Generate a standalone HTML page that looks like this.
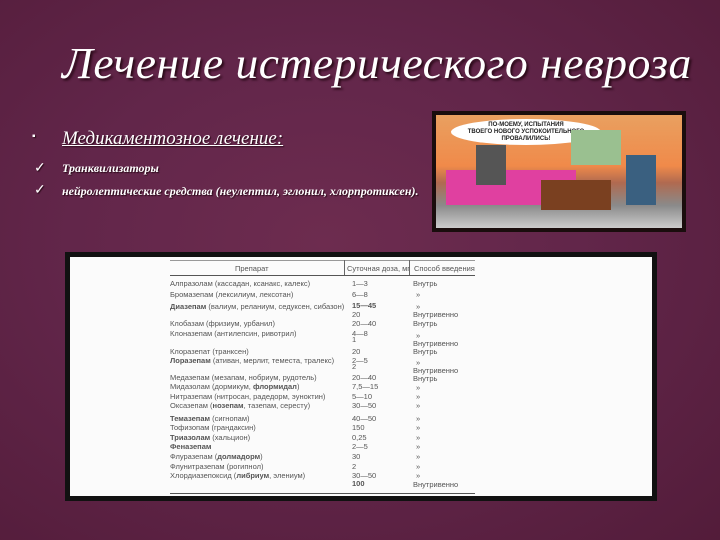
<!DOCTYPE html>
<html><head><meta charset="utf-8"><style>
body{margin:0;width:720px;height:540px;overflow:hidden;background:radial-gradient(ellipse at 45% 45%,#6d2c4f 0%,#62264a 45%,#531c3a 100%);font-family:"Liberation Serif",serif;position:relative}
.t{position:absolute;left:62px;top:38px;font-size:44px;font-style:italic;color:#fff;letter-spacing:0.5px;text-shadow:2px 2px 2px #2a0a18;white-space:nowrap;transform:scaleX(1.035);transform-origin:left}
.b{position:absolute;color:#fff;white-space:nowrap;text-shadow:1px 1px 1px #2a0a18}
.cart{position:absolute;left:432px;top:111px;width:254px;height:121px;background:#1a0d0d;box-sizing:border-box;padding:4px}
.cart>div{width:100%;height:100%;background:linear-gradient(180deg,#e9a060 0%,#f08a4a 45%,#b06a50 60%,#8a8a8a 80%,#ccc 100%);position:relative;overflow:hidden}
.tb{position:absolute;left:65px;top:252px;width:592px;height:249px;background:#111;box-sizing:border-box;padding:5px}
.in{width:100%;height:100%;background:#fbfbfb;position:relative;font-family:"Liberation Sans",sans-serif;font-size:7.5px;color:#555;overflow:hidden}
.in div{position:absolute;white-space:nowrap;line-height:8px}
</style></head><body>
<div class="t">Лечение истерического невроза</div>
<div class="b" style="left:32px;top:131px;font-size:10px">▪</div>
<div class="b" style="left:62px;top:128px;font-size:19px;font-style:italic;text-decoration:underline">Медикаментозное лечение:</div>
<div class="b" style="left:34px;top:160px;font-size:14px">✓</div>
<div class="b" style="left:62px;top:161px;font-size:12px;font-weight:bold;font-style:italic">Транквилизаторы</div>
<div class="b" style="left:34px;top:182px;font-size:14px">✓</div>
<div class="b" style="left:62px;top:184px;font-size:12px;font-weight:bold;font-style:italic">нейролептические средства (неулептил, эглонил, хлорпротиксен).</div>
<div class="cart"><div>
<div style="position:absolute;left:15px;top:4px;width:150px;height:26px;background:#fff;border-radius:50%;font:bold 6px 'Liberation Sans';color:#222;text-align:center;line-height:7px;padding-top:3px;box-sizing:border-box">ПО-МОЕМУ, ИСПЫТАНИЯ<br>ТВОЕГО НОВОГО УСПОКОИТЕЛЬНОГО<br>ПРОВАЛИЛИСЬ!</div>
<div style="position:absolute;left:10px;top:55px;width:130px;height:35px;background:#e040a0"></div>
<div style="position:absolute;left:105px;top:65px;width:70px;height:30px;background:#7a4020"></div>
<div style="position:absolute;left:40px;top:30px;width:30px;height:40px;background:#555"></div>
<div style="position:absolute;left:190px;top:40px;width:30px;height:50px;background:#3a6080"></div>
<div style="position:absolute;left:135px;top:15px;width:50px;height:35px;background:#9ac090"></div>
</div></div>
<div class="tb"><div class="in">
<div style="left:100px;top:3px;width:305px;border-top:1px solid #999;height:0"></div>
<div style="left:100px;top:18px;width:305px;border-top:1px solid #555;height:0"></div>
<div style="left:274px;top:3px;height:15px;border-left:1px solid #666"></div>
<div style="left:339px;top:3px;height:15px;border-left:1px solid #666"></div>
<div style="left:100px;top:236px;width:305px;border-top:1px solid #555;height:0"></div>
<div style="left:165px;top:8px">Препарат</div>
<div style="left:277px;top:8px">Суточная доза, мг</div>
<div style="left:344px;top:8px">Способ введения</div>

<div style="left:100px;top:23px">Алпразолам (кассадан, ксанакс, калекс)</div><div style="left:282px;top:23px">1—3</div><div style="left:343px;top:23px">Внутрь</div>
<div style="left:100px;top:34px">Бромазепам (лексилиум, лексотан)</div><div style="left:282px;top:34px">6—8</div><div style="left:346px;top:34px">»</div>
<div style="left:100px;top:46px"><b>Диазепам</b> (валиум, реланиум, седуксен, сибазон)</div><div style="left:282px;top:45px"><b>15—45</b></div><div style="left:346px;top:46px">»</div>
<div style="left:282px;top:54px">20</div><div style="left:343px;top:54px">Внутривенно</div>
<div style="left:100px;top:63px">Клобазам (фризиум, урбанил)</div><div style="left:282px;top:63px">20—40</div><div style="left:343px;top:63px">Внутрь</div>
<div style="left:100px;top:73px">Клоназепам (антилепсин, ривотрил)</div><div style="left:282px;top:73px">4—8</div><div style="left:346px;top:75px">»</div>
<div style="left:282px;top:79px">1</div><div style="left:343px;top:83px">Внутривенно</div>
<div style="left:100px;top:91px">Клоразепат (транксен)</div><div style="left:282px;top:91px">20</div><div style="left:343px;top:91px">Внутрь</div>
<div style="left:100px;top:100px"><b>Лоразепам</b> (ативан, мерлит, теместа, тралекс)</div><div style="left:282px;top:100px">2—5</div><div style="left:346px;top:102px">»</div>
<div style="left:282px;top:106px">2</div><div style="left:343px;top:110px">Внутривенно</div>
<div style="left:100px;top:117px">Медазепам (мезапам, нобриум, рудотель)</div><div style="left:282px;top:117px">20—40</div><div style="left:343px;top:118px">Внутрь</div>
<div style="left:100px;top:126px">Мидазолам (дормикум, <b>флормидал</b>)</div><div style="left:282px;top:126px">7,5—15</div><div style="left:346px;top:127px">»</div>
<div style="left:100px;top:136px">Нитразепам (нитросан, радедорм, эуноктин)</div><div style="left:282px;top:136px">5—10</div><div style="left:346px;top:136px">»</div>
<div style="left:100px;top:145px">Оксазепам (<b>нозепам</b>, тазепам, сересту)</div><div style="left:282px;top:145px">30—50</div><div style="left:346px;top:145px">»</div>
<div style="left:100px;top:158px"><b>Темазепам</b> (сигнопам)</div><div style="left:282px;top:158px">40—50</div><div style="left:346px;top:158px">»</div>
<div style="left:100px;top:167px">Тофизопам (грандаксин)</div><div style="left:282px;top:167px">150</div><div style="left:346px;top:167px">»</div>
<div style="left:100px;top:177px"><b>Триазолам</b> (хальцион)</div><div style="left:282px;top:177px">0,25</div><div style="left:346px;top:177px">»</div>
<div style="left:100px;top:186px"><b>Феназепам</b></div><div style="left:282px;top:186px">2—5</div><div style="left:346px;top:186px">»</div>
<div style="left:100px;top:196px">Флуразепам (<b>долмадорм</b>)</div><div style="left:282px;top:196px">30</div><div style="left:346px;top:196px">»</div>
<div style="left:100px;top:206px">Флунитразепам (рогипнол)</div><div style="left:282px;top:206px">2</div><div style="left:346px;top:206px">»</div>
<div style="left:100px;top:215px">Хлордиазепоксид (<b>либриум</b>, элениум)</div><div style="left:282px;top:215px">30—50</div><div style="left:346px;top:215px">»</div>
<div style="left:282px;top:223px"><b>100</b></div><div style="left:343px;top:224px">Внутривенно</div>
</div></div>
</body></html>
